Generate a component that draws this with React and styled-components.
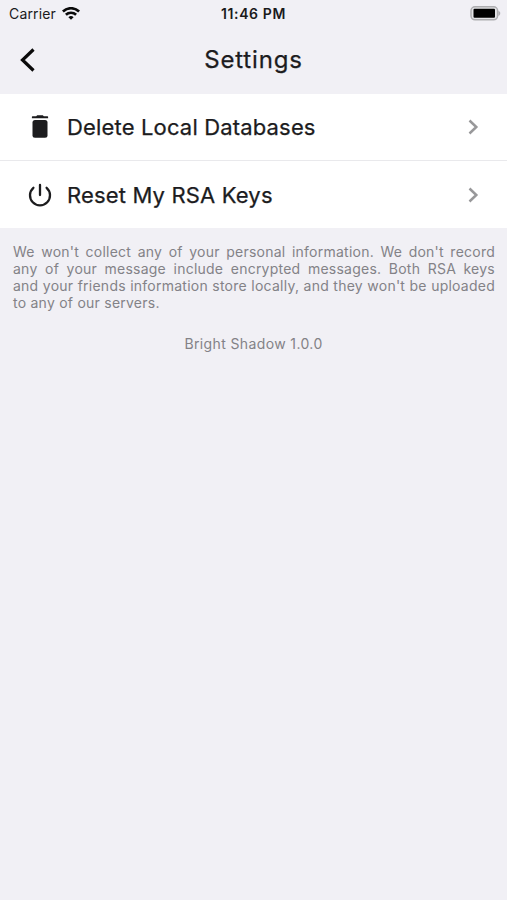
import React from 'react';
import styled, { createGlobalStyle } from 'styled-components';

const Global = createGlobalStyle`
  * { box-sizing: border-box; }
  body { margin: 0; background: #f1f0f5; font-family: Inter, "Liberation Sans", sans-serif; }
`;
const Screen = styled.main`
  min-height: 900px;
  background: #f1f0f5;
  color: #1c1c1e;
`;
const StatusBar = styled.div`
  display: grid;
  grid-template-columns: 1fr auto 1fr;
  align-items: center;
  height: 27px;
  padding: 0 6px 0 9px;
  font-size: 14px;
  line-height: 20px;
  color: #1a1a1c;
`;
const Carrier = styled.div`
  display: flex;
  align-items: center;
  gap: 6px;
  letter-spacing: 0.15px;
`;
const Clock = styled.div`
  font-weight: 600;
  letter-spacing: 0.6px;
  margin-right: 3px;
`;
const Battery = styled.div`
  display: flex;
  justify-content: flex-end;
`;
const NavBar = styled.header`
  display: grid;
  grid-template-columns: 56px 1fr 56px;
  align-items: center;
  height: 67px;
  padding-bottom: 2px;
`;
const BackButton = styled.button`
  display: flex;
  border: 0;
  padding: 0 0 0 20px;
  background: none;
  color: #0a0a0a;
`;
const Title = styled.h1`
  margin: 0;
  text-align: center;
  font-size: 24px;
  line-height: 30px;
  font-weight: 400;
  letter-spacing: 0.85px;
  -webkit-text-stroke: 0.25px currentColor;
`;
const List = styled.div`
  background: #fff;
`;
const Row = styled.div`
  display: flex;
  align-items: center;
  height: 66px;
  padding: 0 28px;

  & + & {
    border-top: 1px solid #e9e9ec;
    height: 68px;
  }
`;
const RowIcon = styled.span`
  display: flex;
  width: 39px;
`;
const RowLabel = styled.span`
  flex: 1;
  font-size: 22px;
  line-height: 28px;
  font-weight: 400;
  letter-spacing: 0.16px;
  -webkit-text-stroke: 0.25px currentColor;
`;
const Privacy = styled.p`
  margin: 0;
  padding: 15px 12px 0 13px;
  color: #838287;
  font-size: 14px;
  line-height: 17px;
  letter-spacing: 0.24px;
  text-align: justify;
`;
const Version = styled.p`
  margin: 24px 0 0;
  text-align: center;
  color: #838287;
  font-size: 14px;
  line-height: 18px;
  letter-spacing: 0.38px;
`;

const Chevron = () => (
  <svg width="12" height="16" viewBox="0 0 12 16" fill="none" stroke="#98989a" strokeWidth="2.5">
    <path d="M2.500 1.500 9.300 8 2.500 14.500" />
  </svg>
);

export default function App() {
  return (
    <Screen>
      <Global />
      <StatusBar>
        <Carrier>
          Carrier
          <svg width="18" height="14" viewBox="0 0 18 14" fill="none" stroke="#0a0a0a" strokeWidth="2.6">
            <path d="M.9 4.500a11.600 11.600 0 0 1 16.200 0M3.900 7.800a7.300 7.300 0 0 1 10.200 0" />
            <path d="M9 12.800 6.400 10.200a3.800 3.800 0 0 1 5.200 0Z" fill="#0a0a0a" stroke="none" />
          </svg>
        </Carrier>
        <Clock>11:46 PM</Clock>
        <Battery>
          <svg width="31" height="15" viewBox="0 0 31 15">
            <rect x="1" y=".8" width="26.600" height="13" rx="4" fill="#e4e4e7" stroke="#adadb0" strokeWidth="1.500" />
            <rect x="3.500" y="2.800" width="21.500" height="9" rx="1" fill="#000" />
            <path d="M28.400 4.700c2.500 1.300 2.500 3.900 0 5.200Z" fill="#adadb0" />
          </svg>
        </Battery>
      </StatusBar>
      <NavBar>
        <BackButton aria-label="Back">
          <svg width="16" height="26" viewBox="0 0 16 26" fill="none" stroke="currentColor" strokeWidth="3.200">
            <path d="M13.500 2.500 2.500 13l11 10.500" />
          </svg>
        </BackButton>
        <Title>Settings</Title>
      </NavBar>
      <List>
        <Row>
          <RowIcon>
            <svg width="24" height="26" viewBox="0 0 24 26" fill="#1c1c1e">
              <path d="M4.500 2.200h3.700l1-1h5.600l1 1h3.700a.6.6 0 0 1 .6.6v1.500H3.900V2.800a.6.6 0 0 1 .6-.6Z" />
              <rect x="4.500" y="6" width="15" height="17.700" rx="2.500" />
            </svg>
          </RowIcon>
          <RowLabel>Delete Local Databases</RowLabel>
          <Chevron />
        </Row>
        <Row>
          <RowIcon>
            <svg width="24" height="26" viewBox="0 0 24 26" fill="none" stroke="#1c1c1e" strokeWidth="2.300" strokeLinecap="round">
              <path d="M12 3v10M5.400 5.800A10 10 0 1 0 18.600 5.800" />
            </svg>
          </RowIcon>
          <RowLabel>Reset My RSA Keys</RowLabel>
          <Chevron />
        </Row>
      </List>
      <Privacy>
        {"We won't collect any of your personal information. We don't record any of your message include encrypted messages. Both RSA keys and\u00a0your friends information store locally, and they won't be uploaded to any of our servers."}
      </Privacy>
      <Version>Bright Shadow 1.0.0</Version>
    </Screen>
  );
}
